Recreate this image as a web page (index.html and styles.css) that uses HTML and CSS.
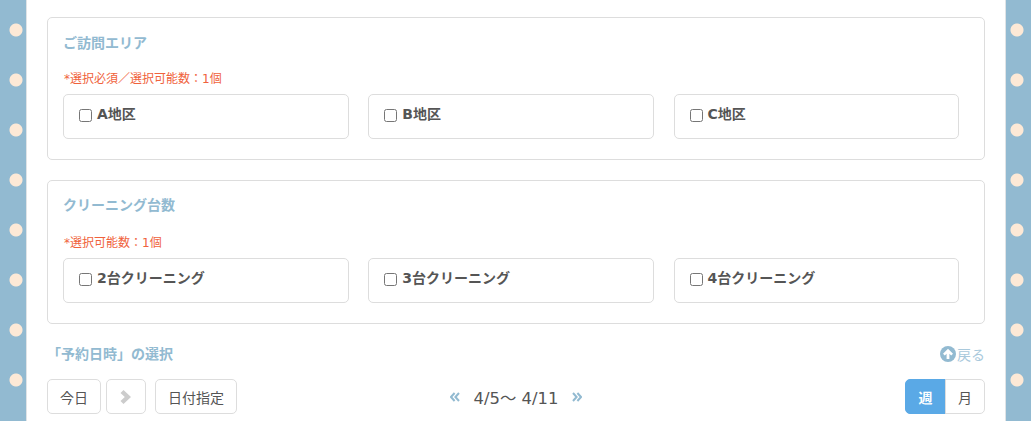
FILE: index.html
```html
<!DOCTYPE html>
<html lang="ja">
<head>
<meta charset="utf-8">
<title>予約</title>
<link rel="stylesheet" href="styles.css">
</head>
<body>
<div class="page">
  <div class="band band-left"></div>
  <main class="main">
    <section class="panel">
      <h2 class="panel-title">ご訪問エリア</h2>
      <p class="note">*選択必須／選択可能数：1個</p>
      <div class="choices">
        <label class="choice"><input type="checkbox"><span>A地区</span></label>
        <label class="choice"><input type="checkbox"><span>B地区</span></label>
        <label class="choice"><input type="checkbox"><span>C地区</span></label>
      </div>
    </section>
    <section class="panel">
      <h2 class="panel-title">クリーニング台数</h2>
      <p class="note">*選択可能数：1個</p>
      <div class="choices">
        <label class="choice"><input type="checkbox"><span>2台クリーニング</span></label>
        <label class="choice"><input type="checkbox"><span>3台クリーニング</span></label>
        <label class="choice"><input type="checkbox"><span>4台クリーニング</span></label>
      </div>
    </section>
    <div class="date-head">
      <h2 class="date-title">「予約日時」の選択</h2>
      <a class="back">
        <svg class="back-icon" viewBox="0 0 16 16" aria-hidden="true"><circle cx="8" cy="8" r="8" fill="#92bad1"/><path d="M8 2.8 13 7.8 11.2 9.5 9.4 7.7V13H6.6V7.7L4.8 9.5 3 7.8Z" fill="#fff"/></svg>戻る
      </a>
    </div>
    <div class="toolbar">
      <div class="tool-left">
        <button class="btn btn-today">今日</button>
        <button class="btn btn-next" disabled>
          <svg class="chev" viewBox="0 0 12 14" aria-hidden="true"><path d="M.5 3 3.5 0 11 7 3.5 14 .5 11 4.8 7Z" fill="#cccccc"/></svg>
        </button>
        <button class="btn btn-date">日付指定</button>
      </div>
      <div class="range">
        <svg class="dbl" viewBox="0 0 10 10" aria-hidden="true"><path d="M4.6 1 1 5l3.6 4M9 1 5.4 5 9 9" fill="none" stroke="#92bad1" stroke-width="2"/></svg>
        <span class="range-text">4/5～ 4/11</span>
        <svg class="dbl" viewBox="0 0 10 10" aria-hidden="true"><path d="M1 1l3.6 4L1 9M5.4 1 9 5 5.4 9" fill="none" stroke="#92bad1" stroke-width="2"/></svg>
      </div>
      <div class="seg">
        <button class="seg-btn seg-on">週</button>
        <button class="seg-btn">月</button>
      </div>
    </div>
  </main>
  <div class="band band-right"></div>
</div>
</body>
</html>
```
FILE: styles.css
```css
* { box-sizing: border-box; }
html, body { margin: 0; height: 100%; overflow: hidden; background: #fff; }
body {
  font-family: "DejaVu Sans", "Noto Sans CJK JP", sans-serif;
  color: #555;
}
.page { display: flex; width: 1031px; height: 421px; }
.band {
  flex: none;
  background-color: #92bad1;
  background-image: radial-gradient(circle at center, #fde9d6 6px, rgba(253,233,214,0) 7px);
  background-size: 26px 50px;
  background-repeat: repeat-y;
}
.band-left { width: 27px; border-right: 1px solid #dfe3e6; background-position: 3px 5px; }
.band-right { width: 26px; border-left: 1px solid #dfe3e6; background-position: -2px 5px; }
.main { flex: 1; padding: 17px 20px 0; min-width: 0; }
.panel {
  border: 1px solid #ddd;
  border-radius: 5px;
  padding: 15px 15px 20px;
  height: 143px;
  margin-bottom: 20px;
}
.panel + .panel { height: 144px; margin-bottom: 0; padding-top: 14px; }
.panel-title {
  margin: 0;
  font-size: 14px;
  font-weight: 700;
  line-height: 20px;
  color: #92bad1;
}
.note {
  margin: 16px 0 0;
  font-size: 12px;
  line-height: 20px;
  color: #f0623c;
  padding-left: 1px;
}
.panel + .panel .note { margin-top: 18px; }
.choices {
  display: grid;
  grid-template-columns: repeat(3, 285.6px);
  column-gap: 19.7px;
  margin-top: 5px;
}
.choice {
  display: flex;
  align-items: center;
  height: 45px;
  padding: 0 15px 3px;
  border: 1px solid #ddd;
  border-radius: 5px;
  font-size: 14px;
  font-weight: 700;
  color: #555;
}
.choice input { width: 13px; height: 13px; margin: 1px 5px 0 0; flex: none; }
.choice span { margin-bottom: 4px; }
.date-head {
  display: flex;
  justify-content: space-between;
  align-items: center;
  margin-top: 20px;
  height: 20px;
}
.date-title { margin: 0; font-size: 14px; font-weight: 700; color: #92bad1; line-height: 20px; }
.back { display: flex; align-items: center; font-size: 14px; color: #a9c9dc; }
.back-icon { width: 16px; height: 16px; margin-right: 1px; }
.toolbar {
  display: grid;
  grid-template-columns: 1fr auto 1fr;
  align-items: center;
  margin-top: 15px;
  height: 35px;
}
.tool-left { display: flex; gap: 5px; }
.tool-left .btn-date { margin-left: 4px; }
.btn {
  height: 35px;
  padding: 0;
  background: #fff;
  border: 1px solid #ddd;
  border-radius: 5px;
  font: inherit;
  font-size: 14px;
  color: #555;
  display: flex;
  align-items: center;
  justify-content: center;
}
.btn-today { width: 54px; }
.btn-next { width: 40px; }
.btn-date { width: 82px; }
.chev { width: 12px; height: 14px; }
.range { display: flex; align-items: center; gap: 14px; }
.range-text { font-size: 16.4px; color: #555; }
.dbl { width: 10px; height: 10px; }
.seg { display: flex; justify-self: end; }
.seg-btn {
  width: 40px;
  height: 35px;
  padding: 0;
  background: #fff;
  border: 1px solid #ddd;
  font: inherit;
  font-size: 14px;
  color: #555;
  border-radius: 0 5px 5px 0;
  margin-left: -1px;
}
.seg-on {
  width: 41px;
  background: #5aa9e6;
  border-color: #5aa9e6;
  color: #fff;
  font-weight: 700;
  border-radius: 5px 0 0 5px;
  margin-left: 0;
}
```
